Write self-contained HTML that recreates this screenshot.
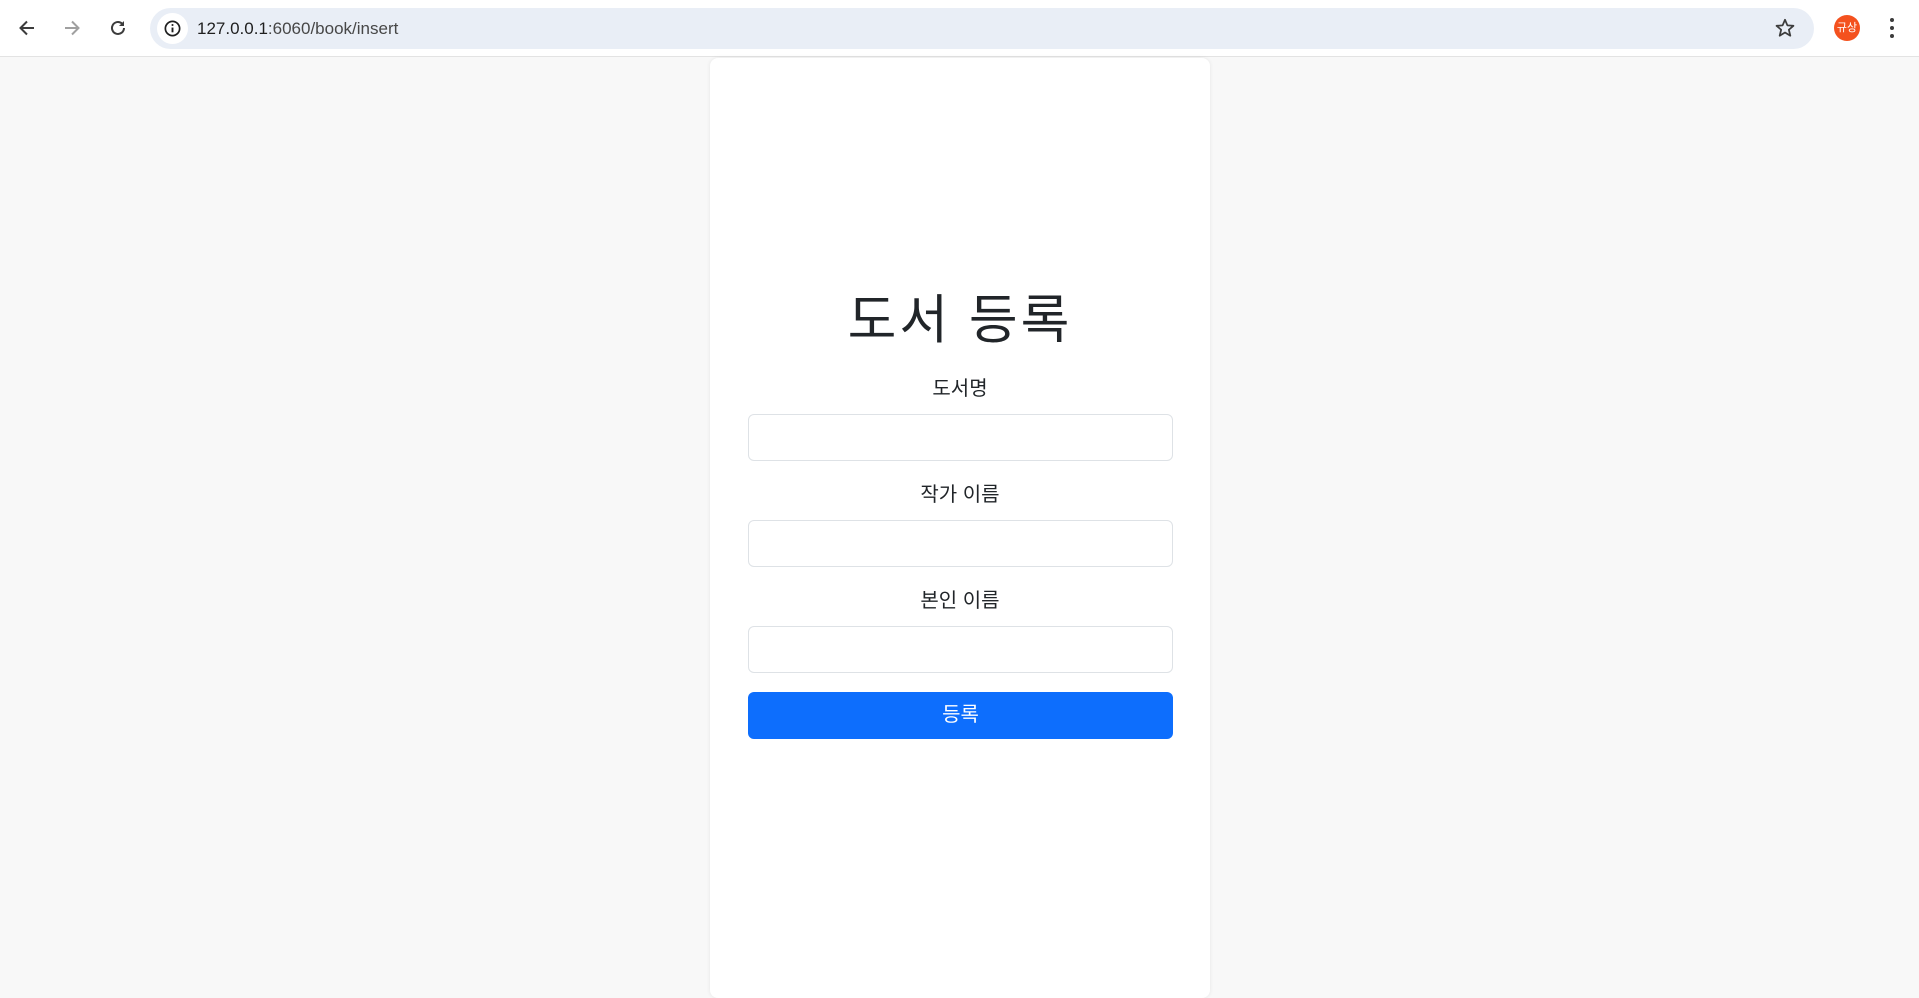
<!DOCTYPE html>
<html><head><meta charset="utf-8"><style>
*{box-sizing:border-box;margin:0;padding:0}
body{width:1919px;height:963px;overflow:hidden;background:#f8f8f8;font-family:"Liberation Sans","Noto Sans CJK KR",sans-serif;position:relative}
.top{position:absolute;left:0;top:0;width:1919px;height:57px;background:#fff;border-bottom:1px solid #e3e3e3}
.pill{position:absolute;left:150px;top:8px;width:1664px;height:41px;border-radius:21px;background:#e9eef6}
.info{position:absolute;left:157px;top:13px;width:31px;height:31px;border-radius:50%;background:#fff}
.url{position:absolute;left:197px;top:19px;font-size:17px;color:#1f1f1f}
.url span{color:#474747}
.card{position:absolute;left:710px;top:58px;width:500px;height:940px;background:#fff;border-radius:8px;box-shadow:0 0 4px rgba(0,0,0,.08)}
h1{position:absolute;left:710px;width:500px;top:286px;text-align:center;font-weight:400;font-size:53px;letter-spacing:3px;color:#212529;line-height:70px}
.lbl{position:absolute;left:710px;width:500px;text-align:center;font-size:20px;color:#212529;line-height:24px}
.in{position:absolute;left:748px;width:425px;height:47px;border:1px solid #dee2e6;border-radius:6px;background:#fff}
.btn{position:absolute;left:748px;top:692px;width:425px;height:47px;border-radius:6px;background:#0d6efd;color:#fff;font-size:20px;text-align:center;line-height:47px}
</style></head><body>
<div class="top">
<svg style="position:absolute;left:17px;top:18px" width="20" height="20" viewBox="0 0 20 20"><path d="M17 10H4M10 3.5L3.5 10 10 16.5" stroke="#3c3c3c" stroke-width="2" fill="none"/></svg>
<svg style="position:absolute;left:62px;top:18px" width="20" height="20" viewBox="0 0 20 20"><path d="M3 10H16M10 3.5L16.5 10 10 16.5" stroke="#a0a0a0" stroke-width="2" fill="none"/></svg>
<svg style="position:absolute;left:108px;top:18px" width="20" height="20" viewBox="0 0 20 20"><path d="M16 10a6 6 0 1 1-2-4.5" stroke="#3c3c3c" stroke-width="2" fill="none"/><path d="M16 3v5h-5z" fill="#3c3c3c"/></svg>
<div class="pill"></div><div class="info"></div>
<svg style="position:absolute;left:163px;top:19px" width="19" height="19" viewBox="0 0 20 20"><circle cx="10" cy="10" r="7.5" stroke="#1f1f1f" stroke-width="1.8" fill="none"/><path d="M10 9v5" stroke="#1f1f1f" stroke-width="2"/><circle cx="10" cy="6.3" r="1.1" fill="#1f1f1f"/></svg>
<div class="url">127.0.0.1<span>:6060/book/insert</span></div>
<svg style="position:absolute;left:1774px;top:17px" width="22" height="22" viewBox="0 0 24 24"><path d="M12 3l2.6 6.1 6.6.5-5 4.3 1.6 6.5L12 16.9l-5.8 3.5 1.6-6.5-5-4.3 6.6-.5z" stroke="#3c3c3c" stroke-width="1.9" fill="none" stroke-linejoin="round"/></svg>
<div style="position:absolute;left:1834px;top:15px;width:26px;height:26px;border-radius:50%;background:#f4511e;color:#fff;font-size:11px;text-align:center;line-height:26px">규상</div>
<div style="position:absolute;left:1890px;top:18px;width:4px">
<div style="width:4px;height:4px;border-radius:2px;background:#3c3c3c;margin-bottom:4px"></div>
<div style="width:4px;height:4px;border-radius:2px;background:#3c3c3c;margin-bottom:4px"></div>
<div style="width:4px;height:4px;border-radius:2px;background:#3c3c3c"></div></div>
</div>
<div class="card"></div>
<h1>도서 등록</h1>
<div class="lbl" style="top:377px">도서명</div>
<div class="in" style="top:414px"></div>
<div class="lbl" style="top:483px">작가 이름</div>
<div class="in" style="top:520px"></div>
<div class="lbl" style="top:589px">본인 이름</div>
<div class="in" style="top:626px"></div>
<div class="btn">등록</div>
</body></html>
